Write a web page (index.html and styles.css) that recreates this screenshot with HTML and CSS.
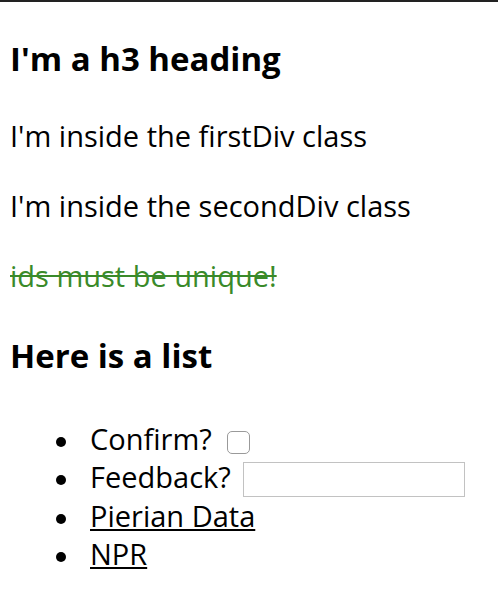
FILE: index.html
```html
<!DOCTYPE html>
<html>
<head>
<meta charset="utf-8">
<title>Classes and IDs</title>
<link rel="stylesheet" href="styles.css">
</head>
<body>
<h3 class="title">I'm a h3 heading</h3>
<div class="firstDiv"><p class="para">I'm inside the firstDiv class</p></div>
<div class="secondDiv"><p class="para">I'm inside the secondDiv class</p></div>
<p class="para unique">ids must be unique!</p>
<h3 class="title subtitle">Here is a list</h3>
<ul class="list">
  <li class="item">Confirm? <input class="check" type="checkbox"></li>
  <li class="item">Feedback? <input class="field" type="text"></li>
  <li class="item"><a class="link" href="#">Pierian Data</a></li>
  <li class="item"><a class="link" href="#">NPR</a></li>
</ul>
</body>
</html>
```
FILE: styles.css
```css
html, body {
  background: #fff;
}
body {
  margin: 0;
  padding: 0 10px;
  border-top: 2px solid #222;
  font-family: "Open Sans", "Noto Sans", sans-serif;
  font-size: 29px;
  color: #000;
}
.title {
  margin: 35px 0 0;
  font-size: 33px;
  line-height: 44px;
  font-weight: 700;
}
.para {
  margin: 32px 0 0;
  line-height: 38px;
}
.firstDiv .para {
  margin-top: 36px;
}
.unique {
  color: #3a8a2a;
  text-decoration: line-through;
}
.subtitle {
  margin-top: 38.5px;
}
.list {
  margin: 42.5px 0 0;
  padding-left: 80px;
  list-style: none;
  line-height: 37.5px;
}
.item::before {
  content: "";
  display: inline-block;
  width: 10px;
  height: 10px;
  margin: 0 24px 0 -34px;
  border-radius: 50%;
  background: #000;
  vertical-align: middle;
}
.check {
  appearance: none;
  -webkit-appearance: none;
  width: 23px;
  height: 23px;
  margin: 0 0 0 8px;
  border: 1px solid #9a9a9a;
  border-radius: 5px;
  background: #fff;
  vertical-align: middle;
  box-sizing: border-box;
}
.field {
  width: 222px;
  height: 35px;
  margin: 0 0 0 5px;
  padding: 0 4px;
  border: 1px solid #c2c2c2;
  border-radius: 0;
  box-sizing: border-box;
  font-size: 20px;
  vertical-align: middle;
  background: #fff;
}
.link {
  color: #000;
  text-decoration: underline;
}
```
